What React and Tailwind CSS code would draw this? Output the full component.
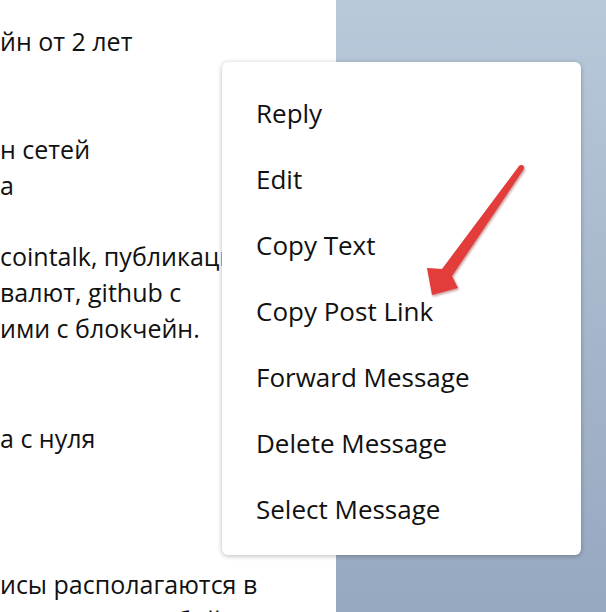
import React from 'react';

const lines = [
  { text: 'йн от 2 лет', mt: 'mt-[23px]' },
  { text: 'н сетей', mt: 'mt-[72px]' },
  { text: 'а', mt: 'mt-0' },
  { text: 'cointalk, публикации', mt: 'mt-[35px]' },
  { text: 'валют, github с', mt: 'mt-0' },
  { text: 'ими с блокчейн.', mt: 'mt-0' },
  { text: 'а с нуля', mt: 'mt-[74px]' },
  { text: 'исы располагаются в', mt: 'mt-[110px]' },
  { text: 'городе, и в любой', mt: 'mt-0' },
];

const menuItems = [
  'Reply',
  'Edit',
  'Copy Text',
  'Copy Post Link',
  'Forward Message',
  'Delete Message',
  'Select Message',
];

const Arrow = () => (
  <svg
    className="absolute left-0 top-0 pointer-events-none"
    width="606"
    height="612"
    viewBox="0 0 606 612"
  >
    <defs>
      <filter id="arrowShadow" x="-20%" y="-20%" width="140%" height="140%">
        <feDropShadow dx="1" dy="1.5" stdDeviation="1" floodColor="#7a1b1b" floodOpacity="0.45" />
      </filter>
    </defs>
    <g filter="url(#arrowShadow)">
      <polygon
        points="523.5,169.5 452,276 458,288 432,295 427,268 442,269 519,166"
        fill="#e23c3a"
      />
      <circle cx="521.3" cy="167.8" r="2.7" fill="#e23c3a" />
    </g>
  </svg>
);

export default function App() {
  return (
    <div
      className="relative w-[606px] h-[612px] overflow-hidden flex"
      style={{ fontFamily: '"Open Sans", "Noto Sans", sans-serif' }}
    >
      <div className="w-[336px] h-full bg-white overflow-hidden">
        <div className="flex flex-col text-[25px] leading-[36px] text-[#111] whitespace-nowrap">
          {lines.map((line, i) => (
            <div key={i} className={line.mt}>
              {line.text}
            </div>
          ))}
        </div>
      </div>
      <div className="flex-1 h-full bg-linear-to-b from-[#b8c9da] to-[#96a7c0]" />

      <div className="absolute left-[222px] top-[62px] w-[359px] h-[493px] bg-white rounded-[6px] shadow-[0_1px_5px_rgba(0,0,0,0.28)] pt-[18px] pb-[13px] pl-[34px]">
        {menuItems.map((item) => (
          <div key={item} className="h-[66px] flex items-center text-[26px] text-[#111]">
            {item}
          </div>
        ))}
      </div>

      <Arrow />
    </div>
  );
}
